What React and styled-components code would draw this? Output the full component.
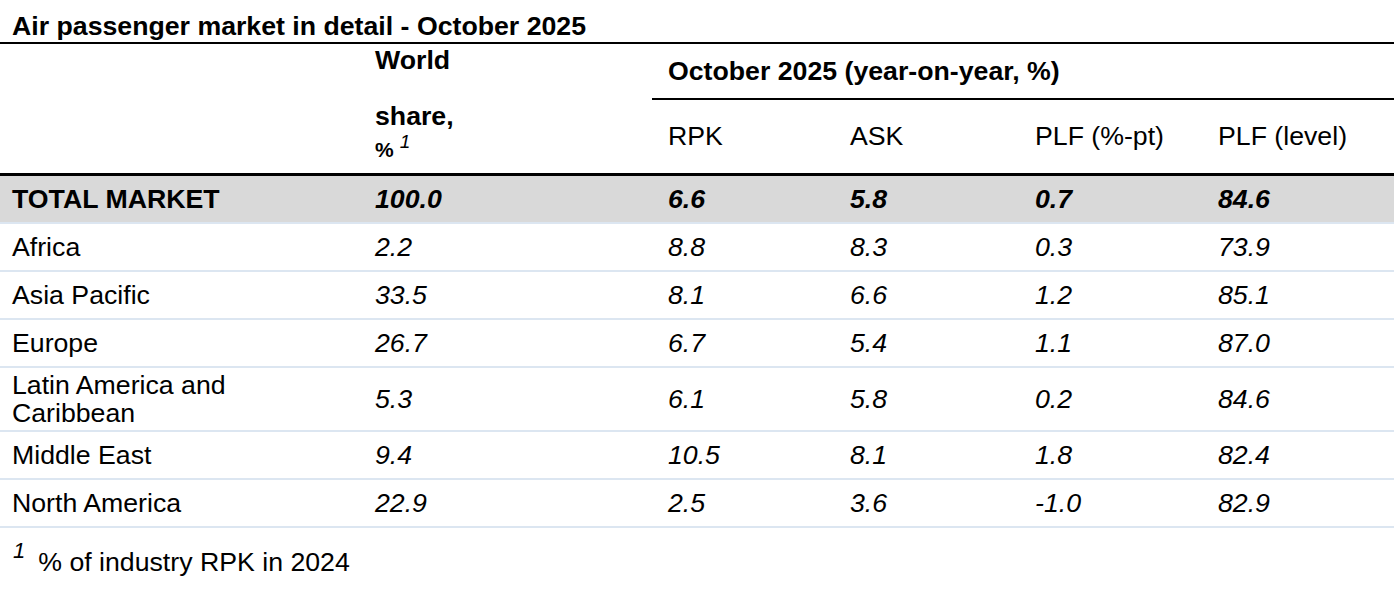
import React from 'react';
import styled, { createGlobalStyle } from 'styled-components';

const GlobalStyle = createGlobalStyle`
  body {
    margin: 0;
    background: #fff;
    font-family: 'Liberation Sans', Arial, sans-serif;
    color: #000;
  }
`;

const COLS = '363px 289px 182px 185px 183px 1fr';
const FS = '26.7px';

const Page = styled.div`
  width: 1394px;
`;

const Title = styled.h1`
  margin: 0;
  height: 42px;
  padding: 0 0 0 12px;
  display: flex;
  align-items: flex-end;
  font-size: ${FS};
  font-weight: 700;
  line-height: 32px;
  border-bottom: 2px solid #000;
`;

const Header = styled.div`
  display: grid;
  grid-template-columns: ${COLS};
  grid-template-rows: 56px 73px;
  border-bottom: 3px solid #000;
  font-size: ${FS};
`;

const WorldHead = styled.div`
  grid-column: 2;
  grid-row: 1 / span 2;
  padding: 2px 0 0 12px;
  font-weight: 700;
  line-height: 28px;
`;

const HeadLine = styled.div`
  height: 28px;
  margin-top: ${p => p.$gap || 0}px;
`;

const Pct = styled.span`
  font-size: 21px;
`;

const PeriodHead = styled.div`
  grid-column: 3 / -1;
  grid-row: 1;
  display: flex;
  align-items: center;
  padding-left: 16px;
  font-weight: 700;
  border-bottom: 2px solid #000;
`;

const SubHead = styled.div`
  grid-row: 2;
  grid-column: ${p => p.$col};
  display: flex;
  align-items: center;
  padding-left: 16px;
`;

const Sup = styled.span`
  display: inline-block;
  font-style: italic;
  font-weight: 400;
  font-size: ${p => p.$size}px;
  line-height: 1;
  position: relative;
  top: -${p => p.$raise}px;
  margin: 0 ${p => p.$right || 0}px 0 ${p => p.$left || 0}px;
`;

const Row = styled.div`
  display: grid;
  grid-template-columns: ${COLS};
  align-items: center;
  min-height: ${p => (p.$tall ? 62 : 46)}px;
  background: ${p => (p.$total ? '#d9d9d9' : '#fff')};
  font-weight: ${p => (p.$total ? 700 : 400)};
  border-bottom: 2px solid #dce6f1;
  font-size: ${FS};
  line-height: 28px;
`;

const Label = styled.div`
  padding-left: 12px;
  max-width: 236px;
`;

const Num = styled.div`
  font-style: italic;
  padding-left: ${p => (p.$first ? 12 : 16)}px;
`;

const Footnote = styled.p`
  margin: 20px 0 0;
  padding-left: 13px;
  font-size: ${FS};
  line-height: 28px;
`;

const rows = [
  { name: 'TOTAL MARKET', v: ['100.0', '6.6', '5.8', '0.7', '84.6'], total: true },
  { name: 'Africa', v: ['2.2', '8.8', '8.3', '0.3', '73.9'] },
  { name: 'Asia Pacific', v: ['33.5', '8.1', '6.6', '1.2', '85.1'] },
  { name: 'Europe', v: ['26.7', '6.7', '5.4', '1.1', '87.0'] },
  { name: 'Latin America and Caribbean', v: ['5.3', '6.1', '5.8', '0.2', '84.6'], tall: true },
  { name: 'Middle East', v: ['9.4', '10.5', '8.1', '1.8', '82.4'] },
  { name: 'North America', v: ['22.9', '2.5', '3.6', '-1.0', '82.9'] },
];

const subHeads = ['RPK', 'ASK', 'PLF (%-pt)', 'PLF (level)'];

const App = () => (
  <Page>
    <GlobalStyle />
    <Title>Air passenger market in detail - October 2025</Title>
    <Header>
      <WorldHead>
        <HeadLine>World</HeadLine>
        <HeadLine $gap={28}>share,</HeadLine>
        <HeadLine $gap={4}>
          <Pct>%</Pct>
          <Sup $size={19} $raise={9} $left={6}>1</Sup>
        </HeadLine>
      </WorldHead>
      <PeriodHead>October 2025 (year-on-year, %)</PeriodHead>
      {subHeads.map((h, i) => (
        <SubHead key={h} $col={i + 3}>{h}</SubHead>
      ))}
    </Header>
    {rows.map(r => (
      <Row key={r.name} $total={r.total} $tall={r.tall}>
        <Label>{r.name}</Label>
        {r.v.map((n, i) => (
          <Num key={i} $first={i === 0}>{n}</Num>
        ))}
      </Row>
    ))}
    <Footnote>
      <Sup $size={22} $raise={13} $right={13}>1</Sup>% of industry RPK in 2024
    </Footnote>
  </Page>
);

export default App;
